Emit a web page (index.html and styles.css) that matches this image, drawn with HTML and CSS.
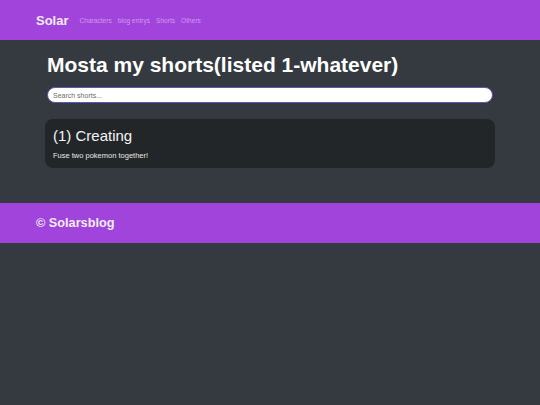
FILE: index.html
```html
<!DOCTYPE html>
<html>
<head>
<meta charset="utf-8">
<link rel="stylesheet" href="styles.css">
</head>
<body>
<header class="topbar">
  <div class="bar-inner">
    <span class="brand">Solar</span>
    <nav class="nav">
      <a class="nav-link">Characters</a>
      <a class="nav-link">blog entrys</a>
      <a class="nav-link">Shorts</a>
      <a class="nav-link">Others</a>
    </nav>
  </div>
</header>
<main class="main">
  <div class="content">
    <h1 class="title">Mosta my shorts(listed 1-whatever)</h1>
    <input class="search" type="text" placeholder="Search shorts...">
    <div class="card">
      <h2 class="card-title">(1) Creating</h2>
      <p class="card-text">Fuse two pokemon together!</p>
    </div>
  </div>
</main>
<footer class="footer">
  <div class="bar-inner">
    <span class="copy">© Solarsblog</span>
  </div>
</footer>
</body>
</html>
```

FILE: styles.css
```css
html, body {
  margin: 0;
  padding: 0;
  background: #343a40;
  font-family: "Liberation Sans", Arial, sans-serif;
  color: #f8f9fa;
}
.topbar, .footer {
  background: #a044dc;
  height: 40px;
  display: flex;
  align-items: center;
}
.bar-inner {
  padding-left: 36px;
  display: flex;
  align-items: center;
}
.brand {
  font-weight: bold;
  font-size: 13px;
  color: #f4ecfb;
  margin-right: 11px;
}
.nav {
  display: flex;
  gap: 6px;
}
.nav-link {
  font-size: 6.6px;
  color: #cf9af0;
}
.main {
  padding: 10px 0 35px;
}
.content {
  width: 450px;
  margin: 0 auto;
  display: flex;
  flex-direction: column;
}
.title {
  margin: 0 0 7px 2px;
  font-size: 21px;
  font-weight: bold;
  line-height: 30px;
  color: #ffffff;
}
.search {
  margin: 0 2px;
  height: 16px;
  box-sizing: border-box;
  border: 1px solid #5a58b0;
  border-radius: 8px;
  padding: 0 5px;
  font-family: "Liberation Sans", Arial, sans-serif;
  font-size: 7px;
  background: #ffffff;
  outline: none;
}
.search::placeholder {
  color: #6c6c6c;
}
.card {
  margin-top: 16px;
  background: #232629;
  border-radius: 8px;
  padding: 7px 8px 8px;
}
.card-title {
  margin: 0;
  font-weight: normal;
  font-size: 15px;
  line-height: 20px;
  color: #f4f4f4;
}
.card-text {
  margin: 6px 0 0;
  font-size: 7.5px;
  line-height: 8px;
  color: #e6e6e6;
}
.copy {
  font-weight: bold;
  font-size: 12.7px;
  color: #f4ecfb;
}
```
